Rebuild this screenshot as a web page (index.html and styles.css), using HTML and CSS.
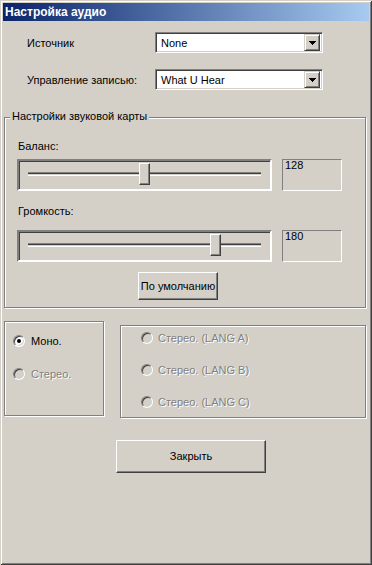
FILE: index.html
```html
<!DOCTYPE html>
<html lang="ru">
	<head>
		<meta charset="UTF-8" />
		<meta name="viewport" content="width=device-width, initial-scale=1.0" />
		<title>Настройка аудио</title>
		<link rel="stylesheet" href="styles.css">
	</head>
	<body>
		<div class="window">
			<div class="titlebar">Настройка аудио</div>

			<div class="content">
				<div class="field-row first">
					<span class="field-label">Источник</span>
					<div class="combo">
						<span class="combo-text">None</span>
						<span class="combo-btn">
							<svg width="7" height="4" viewBox="0 0 7 4" shape-rendering="crispEdges"><path d="M0 0h7v1h-1v1h-1v1h-1v1h-1v-1h-1v-1h-1v-1h-1z" fill="#000"/></svg>
						</span>
					</div>
				</div>

				<div class="field-row">
					<span class="field-label">Управление записью:</span>
					<div class="combo">
						<span class="combo-text">What U Hear</span>
						<span class="combo-btn">
							<svg width="7" height="4" viewBox="0 0 7 4" shape-rendering="crispEdges"><path d="M0 0h7v1h-1v1h-1v1h-1v1h-1v-1h-1v-1h-1v-1h-1z" fill="#000"/></svg>
						</span>
					</div>
				</div>

				<div class="group sound-group">
					<span class="group-title">Настройки звуковой карты</span>

					<div class="slider-label">Баланс:</div>
					<div class="slider-row">
						<div class="slider">
							<div class="slider-track"></div>
							<div class="slider-thumb" style="left: 120px"></div>
						</div>
						<div class="value-box">128</div>
					</div>

					<div class="slider-label second">Громкость:</div>
					<div class="slider-row tight">
						<div class="slider">
							<div class="slider-track"></div>
							<div class="slider-thumb" style="left: 191px"></div>
						</div>
						<div class="value-box">180</div>
					</div>

					<button class="btn btn-default">По умолчанию</button>
				</div>

				<div class="mode-row">
					<div class="group mono-group">
						<div class="radio-row">
							<span class="radio checked"></span>
							<span class="radio-text">Моно.</span>
						</div>
						<div class="radio-row disabled">
							<span class="radio"></span>
							<span class="radio-text">Стерео.</span>
						</div>
					</div>
					<div class="group stereo-group">
						<div class="radio-row disabled">
							<span class="radio"></span>
							<span class="radio-text">Стерео. (LANG A)</span>
						</div>
						<div class="radio-row disabled">
							<span class="radio"></span>
							<span class="radio-text">Стерео. (LANG B)</span>
						</div>
						<div class="radio-row disabled">
							<span class="radio"></span>
							<span class="radio-text">Стерео. (LANG C)</span>
						</div>
					</div>
				</div>

				<button class="btn btn-close">Закрыть</button>
			</div>
		</div>
	</body>
</html>
```

FILE: styles.css
```css
* {
	margin: 0;
	padding: 0;
	box-sizing: border-box;
}

html,
body {
	background: #d4d0c8;
}

body {
	font-family: "Liberation Sans", Arial, sans-serif;
	font-size: 11px;
	line-height: 13px;
	color: #000;
}

.window {
	width: 372px;
	height: 565px;
	padding: 3px;
	overflow: hidden;
	background: #d4d0c8;
	box-shadow: inset 1px 1px 0 #d4d0c8, inset -1px -1px 0 #404040,
		inset 2px 2px 0 #fff, inset -2px -2px 0 #808080;
}

.titlebar {
	height: 18px;
	padding-left: 2px;
	background: linear-gradient(to right, #0a246a, #a6caf0);
	color: #fff;
	font-weight: bold;
	font-size: 12px;
	line-height: 18px;
}

/* combo rows */

.field-row {
	display: flex;
	align-items: center;
	margin-top: 16px;
}

.field-row.first {
	margin-top: 11px;
}

.field-label {
	width: 152px;
	padding-left: 24px;
	padding-top: 2px;
}

.combo {
	display: flex;
	align-items: center;
	width: 168px;
	height: 21px;
	padding: 2px;
	background: #fff;
	border: 1px solid;
	border-color: #808080 #fff #fff #808080;
	box-shadow: inset 1px 1px 0 #404040, inset -1px -1px 0 #d4d0c8;
}

.combo-text {
	flex: 1;
	padding-left: 3px;
	padding-top: 1px;
}

.combo-btn {
	display: flex;
	align-items: center;
	justify-content: center;
	width: 16px;
	height: 17px;
	background: #d4d0c8;
	border: 1px solid;
	border-color: #d4d0c8 #404040 #404040 #d4d0c8;
	box-shadow: inset 1px 1px 0 #fff, inset -1px -1px 0 #808080;
}

/* group boxes */

.group {
	position: relative;
	border: 1px solid #808080;
	box-shadow: inset 1px 1px 0 #fff, 1px 1px 0 #fff;
}

.group-title {
	position: absolute;
	top: -8px;
	left: 5px;
	padding: 0 2px;
	background: #d4d0c8;
}

.sound-group {
	margin: 27px 3px 0 1px;
	padding: 22px 0 7px 12px;
}

.slider-label {
	padding-left: 1px;
}

.slider-label.second {
	margin-top: 14px;
}

.slider-row {
	display: flex;
	gap: 10px;
	margin-top: 6px;
}

.slider-row.tight {
	margin-top: 12px;
}

.slider {
	position: relative;
	width: 255px;
	height: 32px;
	padding: 11px 0 0 9px;
	border: 2px solid;
	border-color: #808080 #fff #fff #808080;
	box-shadow: inset 1px 1px 0 #404040, inset -1px -1px 0 #d4d0c8;
}

.slider-track {
	width: 233px;
	height: 4px;
	border-top: 1px solid #808080;
	border-bottom: 1px solid #fff;
	box-shadow: inset 0 1px 0 #404040, inset 0 -1px 0 #d4d0c8;
}

.slider-thumb {
	position: absolute;
	top: 2px;
	width: 11px;
	height: 22px;
	background: #d4d0c8;
	border: 1px solid;
	border-color: #fff #404040 #404040 #fff;
	box-shadow: inset -1px -1px 0 #808080;
}

.value-box {
	width: 60px;
	height: 32px;
	padding: 0 2px;
	line-height: 11px;
	border: 1px solid;
	border-color: #808080 #fff #fff #808080;
}

/* buttons */

.btn {
	display: block;
	font: inherit;
	color: #000;
	background: #d4d0c8;
	border: 1px solid;
	border-color: #fff #404040 #404040 #fff;
	box-shadow: inset -1px -1px 0 #808080;
}

.btn-default {
	width: 80px;
	height: 28px;
	margin: 10px 0 0 121px;
}

.btn-close {
	width: 150px;
	height: 33px;
	margin: 22px 0 0 113px;
}

/* radio groups */

.mode-row {
	display: flex;
	align-items: flex-start;
	gap: 16px;
	margin: 13px 3px 0 1px;
}

.mono-group {
	width: 100px;
	height: 95px;
	padding: 11px 0 0 8px;
}

.stereo-group {
	width: 246px;
	height: 93px;
	margin-top: 4px;
	padding: 4px 0 0 20px;
}

.radio-row {
	display: flex;
	align-items: center;
	height: 16px;
}

.mono-group .radio-row + .radio-row {
	margin-top: 17px;
}

.stereo-group .radio-row + .radio-row {
	margin-top: 16px;
}

.radio {
	display: flex;
	align-items: center;
	justify-content: center;
	width: 12px;
	height: 12px;
	border-radius: 50%;
	background: #fff;
	border: 1px solid;
	border-color: #808080 #fff #fff #808080;
	box-shadow: inset 1px 1px 0 #404040, inset -1px -1px 0 #d4d0c8;
}

.radio.checked::after {
	content: "";
	width: 4px;
	height: 4px;
	border-radius: 50%;
	background: #000;
}

.radio-text {
	margin-left: 6px;
}

.stereo-group .radio-text {
	margin-left: 5px;
}

.radio-row.disabled .radio {
	background: #d4d0c8;
}

.radio-row.disabled .radio-text {
	color: #808080;
	text-shadow: 1px 1px 0 #fff;
}
```
